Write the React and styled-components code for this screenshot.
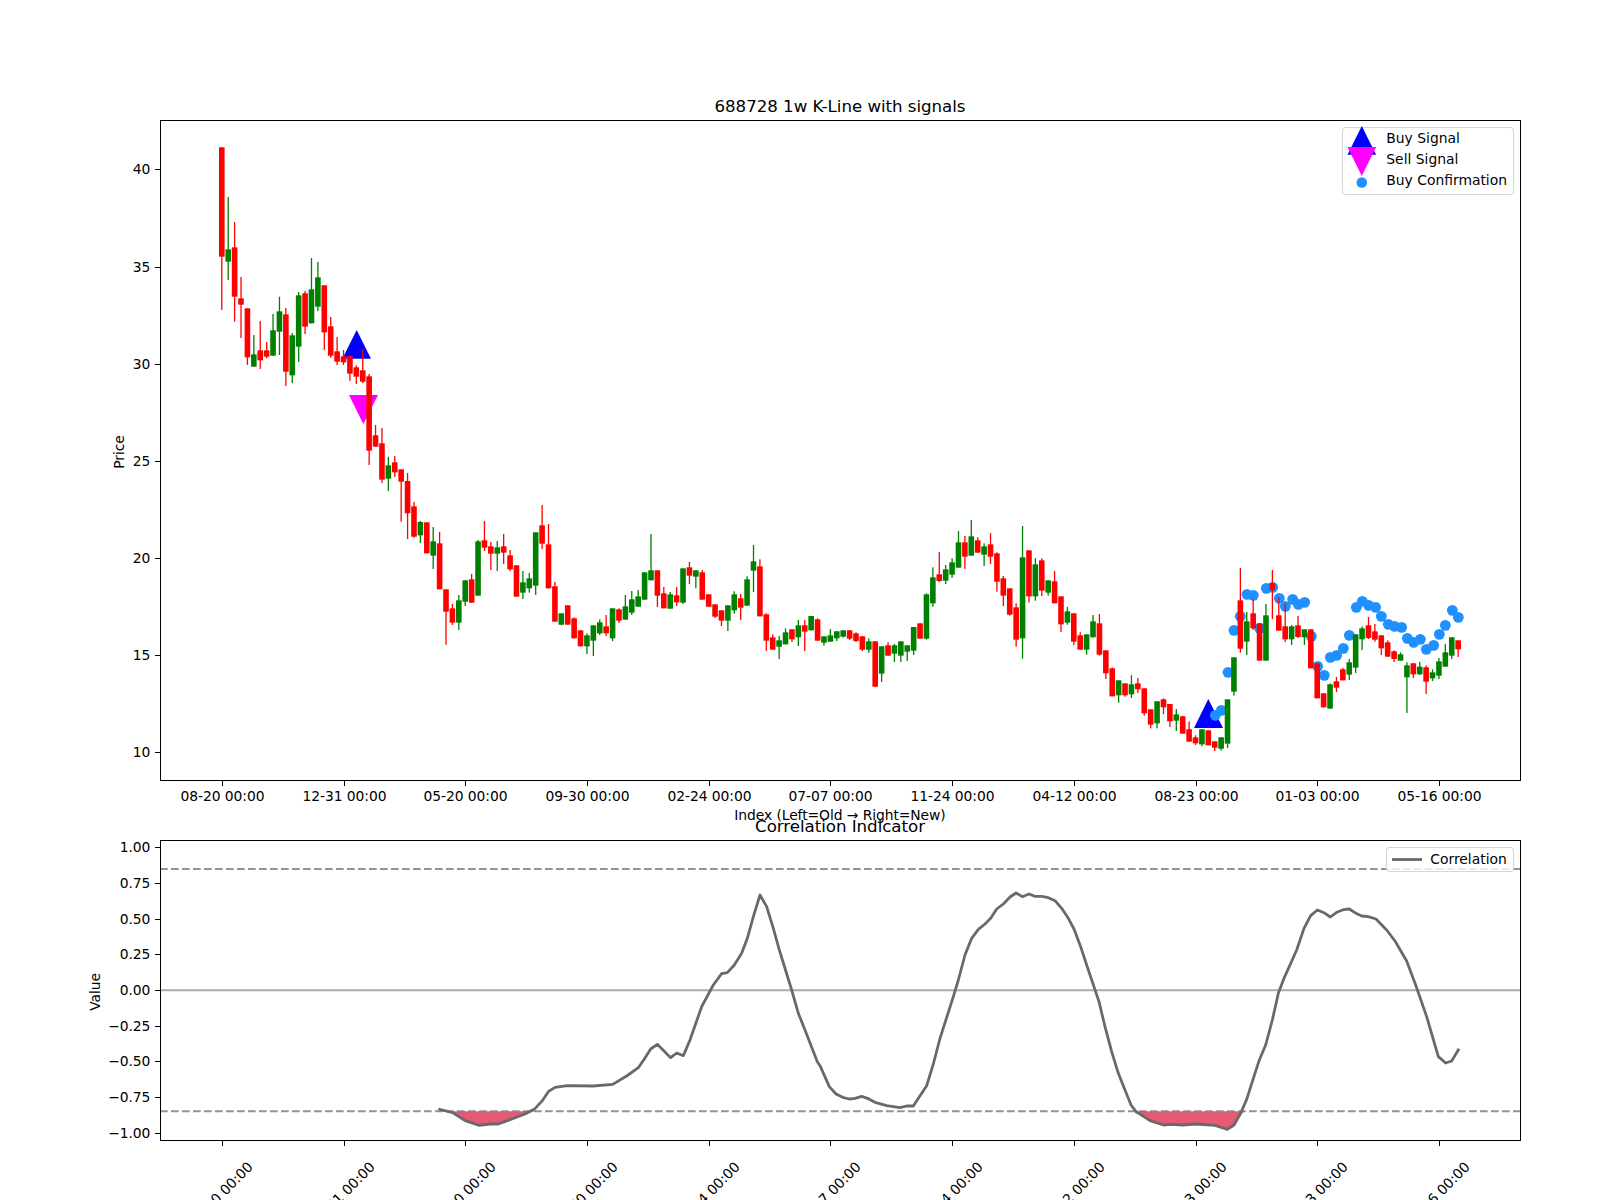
import styled, { createGlobalStyle } from 'styled-components';

const GlobalStyle = createGlobalStyle`
    html, body {
        margin: 0;
        background: #fff;
    }
`;

const Figure = styled.div`
    width: 1600px;
    height: 1200px;
    overflow: hidden;
    background: #fff;
    color: #000;
    font-family: 'DejaVu Sans', sans-serif;
`;

const Panel = styled.section`
    position: relative;
    height: ${props => props.$height}px;
    display: flex;
    flex-direction: column;
`;

const PanelTitle = styled.h2`
    flex: 0 0 ${props => props.$height}px;
    display: flex;
    align-items: flex-end;
    justify-content: center;
    box-sizing: border-box;
    width: 1360px;
    margin: 0 0 0 160px;
    padding-bottom: 3px;
    font-size: 16.67px;
    font-weight: 400;
    line-height: 20px;
    letter-spacing: -0.04px;
    white-space: nowrap;
`;

const Plot = styled.svg`
    display: block;
    flex: 1 1 0;
    min-height: 0;
    overflow: visible;
`;

const AxisText = styled.text`
    font-family: 'DejaVu Sans', sans-serif;
    font-size: 13.89px;
    letter-spacing: -0.08px;
    fill: #000;
    text-anchor: ${props => props.$anchor || 'middle'};
`;

const Legend = styled.div`
    position: absolute;
    top: ${props => props.$top}px;
    right: 86px;
    box-sizing: border-box;
    width: ${props => props.$width}px;
    padding: ${props => props.$padding};
    display: flex;
    flex-direction: column;
    gap: 3.9px;
    background: rgba(255, 255, 255, 0.8);
    border: 1px solid rgba(204, 204, 204, 0.8);
    border-radius: 4px;
`;

const LegendRow = styled.div`
    display: flex;
    align-items: center;
    gap: 8.8px;
    height: 17px;
    font-size: 13.89px;
    line-height: 17px;
    white-space: nowrap;
`;

const LegendKey = styled.svg`
    flex: 0 0 30px;
    width: 30px;
    height: 17px;
    overflow: visible;
`;

const AX = { left: 160, right: 1520 };
const TICK_LABELS = ['08-20 00:00', '12-31 00:00', '05-20 00:00', '09-30 00:00', '02-24 00:00', '07-07 00:00', '11-24 00:00', '04-12 00:00', '08-23 00:00', '01-03 00:00', '05-16 00:00'];
const candleX = i => 221.8 + 6.406 * i;
const tickX = i => Math.round(candleX(i * 19)) + 0.5;

// rows read off the picture at 3x: colour, high, body top, body bottom, low
const CANDLE_CHUNKS = [
    { oy: 100, rows: [
        ['R',142,142,470,630],['G',291,448,485,540],['R',366,442,590,665],['R',531,595,614,714],['R',625,625,772,795],
        ['G',705,763,800,800],['R',663,751,781,807],['R',726,751,770,775],['G',642,691,767,767],['G',590,634,695,765],
        ['R',624,643,815,858],['G',699,706,826,849],['G',576,586,740,786],['R',573,580,680,702],['G',474,568,670,670],
        ['G',486,532,620,633],['R',556,556,697,750],['R',651,679,767,773],['R',711,754,785,795],['R',750,769,787,795],
        ['R',766,768,821,843],['R',796,802,830,852],['R',747,811,845,849],['R',822,829,1052,1095],['R',975,1006,1040,1040],
        ['R',984,1030,1139,1149],['G',1071,1096,1136,1173],['R',1068,1087,1117,1131],['R',1108,1108,1145,1265],
    ] },
    { oy: 480, rows: [
        ['R',-21,3,100,177],['R',66,79,170,173],['G',123,126,166,189],['R',127,127,220,220],['G',141,184,227,267],
        ['R',156,190,328,328],['R',328,328,395,494],['R',372,385,428,435],['G',345,361,428,450],['G',300,301,365,378],
        ['R',282,298,368,368],['G',180,184,347,347],['R',123,181,203,213],['R',186,199,221,270],['G',183,202,221,273],
        ['R',162,199,218,252],['R',210,226,268,273],['R',256,256,350,350],['G',273,307,338,357],['G',279,295,325,338],
        ['G',157,157,317,345],['R',75,136,191,207],['R',132,193,325,325],['R',306,319,425,425],['G',400,400,434,436],
        ['R',376,376,434,434],['R',412,415,475,475],['R',451,451,499,499],['G',460,466,499,522],['G',436,436,482,528],
        ['G',418,427,460,465],['R',405,439,460,468],['G',385,385,475,483],['R',385,388,422,429],['G',345,379,419,419],
        ['G',333,358,398,405],['G',330,349,380,380],['G',277,277,359,359],['G',162,271,301,301],['R',271,271,347,381],
        ['R',321,340,385,385],['G',336,343,386,386],['R',321,346,367,378],['G',265,265,368,372],['R',246,262,287,312],
        ['G',271,271,290,325],['R',270,277,359,359],['R',343,343,380,380],['R',373,373,410,414],['R',391,391,422,438],
        ['G',376,376,422,453],['G',334,343,391,401],['R',342,355,383,420],['G',289,298,377,378],['G',195,244,272,336],
        ['R',238,259,409,409],['R',400,403,482,513],['R',463,472,509,509],['G',468,481,500,537],['G',445,457,493,493],
        ['R',448,448,478,486],['G',420,436,472,498],['R',420,436,455,513],['G',408,408,451,451],['R',415,418,482,482],
    ] },
    { oy: 480, rows: [
        ['G',469,469,488,497],['G',447,466,485,485],['G',453,454,475,483],['G',450,451,470,473],['R',450,451,476,480],
        ['R',457,460,483,486],['R',468,469,509,513],['G',475,484,509,518],['R',484,484,620,620],['G',499,499,581,606],
        ['R',487,496,527,527],['G',492,496,521,546],['G',484,484,527,546],['G',496,496,515,543],['G',441,441,512,525],
        ['R',430,430,476,476],['G',340,343,476,479],['G',262,292,370,380],['R',216,283,303,306],['G',255,268,302,312],
        ['G',235,247,284,293],['G',153,187,263,263],['R',168,187,230,267],['G',120,169,227,227],['R',172,181,218,218],
        ['G',190,199,224,258],['R',159,193,230,252],['R',217,220,305,335],['R',288,295,347,378],['R',325,325,404,407],
        ['R',370,382,479,500],['G',138,232,475,536],['R',211,211,349,368],['G',235,253,349,362],['R',235,241,332,348],
        ['G',301,301,338,347],['R',273,304,370,370],['R',349,349,433,456],['G',381,394,428,434],['R',400,400,485,495],
        ['R',457,466,509,509],['G',463,463,509,524],['G',405,424,472,472],['R',402,430,524,527],['R',511,511,580,597],
        ['R',562,565,649,649],['G',601,601,646,668],['R',610,610,646,650],['G',586,613,643,654],['R',594,610,628,639],
        ['R',625,625,700,707],['R',688,688,734,745],['G',664,664,730,745],['R',655,658,682,703],['R',672,672,724,741],
        ['G',687,703,722,753],['R',707,709,761,761],
    ] },
    { oy: 540, rows: [
        ['R',544,568,605,605],['R',586,592,610,615],['G',568,568,613,619],['R',571,571,616,616],['R',604,604,623,633],
        ['G',592,592,626,632],['G',478,478,611,624],['G',352,352,455,467],['R',84,181,326,338],['G',216,244,305,345],
        ['R',178,220,265,270],['R',250,250,362,362],['G',192,226,362,362],['R',90,130,150,237],['R',172,226,272,272],
        ['R',190,259,298,306],['G',255,259,298,315],['R',228,256,291,294],['G',268,268,292,315],['R',268,268,385,385],
        ['R',370,370,475,475],['R',460,460,502,502],['G',430,433,506,506],['R',411,424,443,456],['R',384,388,421,421],
        ['G',357,367,404,420],['G',283,283,383,399],['G',259,265,298,330],['R',231,256,294,297],['R',252,274,299,305],
        ['R',286,286,325,345],['R',301,307,350,350],['R',331,334,357,366],['G',337,343,362,362],['G',367,376,412,519],
        ['R',369,370,403,414],['G',366,380,403,405],['R',376,382,425,462],['G',388,397,415,423],['G',354,364,407,417],
        ['G',312,337,380,380],['G',292,292,347,357],['R',301,301,328,351],
    ] },
];

const candles = CANDLE_CHUNKS.flatMap(({ oy, rows }) =>
    rows.map(([c, h, t, b, l]) => ({
        color: c === 'R' ? '#ff0000' : '#008000',
        high: oy + h / 3,
        top: oy + t / 3,
        bottom: oy + b / 3,
        low: oy + l / 3,
    }))
);

const CONFIRM_DOTS = [
    [196,526],[214,511],[234,397],[252,271],[271,229],[291,163],[310,166],[329,265],[349,145],[368,142],
    [388,175],[406,199],[428,178],[445,193],[464,187],[484,289],[503,379],[523,406],[541,352],[560,346],
    [580,325],[598,286],[619,202],[637,184],[656,196],[677,202],[694,229],[715,253],[734,259],[755,262],
    [772,295],[791,307],[811,298],[829,328],[851,316],[868,283],[886,256],[907,211],[925,232],
].map(([x, y]) => [1150 + x / 3, 540 + y / 3]);

const CORR_SEGMENTS = [
    { ox: 430, pts: [[25,747],[68,758],[105,782],[148,796],[180,792],[205,792],[240,779],[285,762],[315,746],[337,722],[356,694],[375,682],[412,677],[490,678],[548,673],[590,648],[625,623],[643,597],[662,567],[682,553],[702,573],[722,593],[740,579],[760,587],[780,540],[815,440],[850,375],[875,341],[892,338],[913,315],[935,280],[952,235],[970,170],[990,105],[1010,140],[1030,205],[1048,270],[1085,390],[1105,460],[1125,510],[1162,605]] },
    { ox: 820, pts: [[0,617],[28,680],[48,702],[68,712],[88,717],[105,715],[125,709],[145,716],[165,727],[200,737],[240,743],[260,738],[280,738],[320,677],[340,612],[360,535],[400,410],[415,360],[435,285],[455,235],[475,208],[495,192],[512,175],[530,147],[550,132],[570,111],[588,99],[607,110],[627,102],[645,109],[665,109],[685,113],[705,122],[725,145],[745,175],[762,207],[782,260],[800,315],[837,425],[855,500],[875,575],[895,640],[915,690],[933,735],[950,757]] },
    { ox: 1140, pts: [[0,762],[30,782],[70,795],[90,793],[130,795],[165,792],[225,796],[262,808],[282,795],[302,760],[320,718],[340,655],[358,600],[377,555],[397,480],[415,400],[432,355],[470,270],[492,205],[512,167],[532,150],[552,158],[571,171],[590,157],[610,149],[628,147],[648,160],[665,168],[685,170],[708,177],[740,210],[765,243],[800,303],[827,375],[860,470],[895,590],[917,609],[935,603],[957,566]] },
];

const corr = CORR_SEGMENTS.flatMap(({ ox, pts }) => pts.map(([x, y]) => [ox + x / 3, 860 + y / 3]));
const LOWER_BAND = 1111.3;
const UPPER_BAND = 869;
const corrLine = corr.map(p => p.join(',')).join(' ');
const corrFill = corr.map(([x, y]) => `${x},${Math.max(y, LOWER_BAND)}`).join(' ');

const PRICE_TICKS = [[40, 169.5], [35, 267.5], [30, 364.5], [25, 461.5], [20, 558.5], [15, 655.5], [10, 752.5]];
const VALUE_TICKS = [['1.00', 847.5], ['0.75', 883.5], ['0.50', 919.5], ['0.25', 954.5], ['0.00', 990.5], ['−0.25', 1026.5], ['−0.50', 1061.5], ['−0.75', 1097.5], ['−1.00', 1133.5]];

const Frame = ({ top, bottom }) => (
    <rect x={AX.left + 0.5} y={top + 0.5} width={AX.right - AX.left} height={bottom - top} fill="none" stroke="#000" strokeWidth="1.11" shapeRendering="crispEdges" />
);

const XTicks = ({ y }) => TICK_LABELS.map((_, i) => (
    <line key={i} x1={tickX(i)} x2={tickX(i)} y1={y} y2={y + 5.4} stroke="#000" strokeWidth="1.11" shapeRendering="crispEdges" />
));

const YAxis = ({ ticks }) => ticks.map(([label, y]) => (
    <g key={label}>
        <line x1={AX.left - 4.9} x2={AX.left} y1={y} y2={y} stroke="#000" strokeWidth="1.11" shapeRendering="crispEdges" />
        <AxisText x={150.3} y={y + 4.5} $anchor="end">{label}</AxisText>
    </g>
));

const Candles = () => candles.map((c, i) => {
    const x = candleX(i);
    return (
        <g key={i} fill={c.color}>
            <rect x={x - 0.65} y={c.high} width={1.3} height={c.low - c.high} />
            <rect x={x - 2.8} y={c.top} width={5.6} height={c.bottom - c.top} />
        </g>
    );
});

const PriceChart = () => (
    <Panel $height={810}>
        <PanelTitle $height={120}>688728 1w K-Line with signals</PanelTitle>
        <Plot viewBox="0 120 1600 690" width="1600" height="690">
            <polygon points="356.7,330 342.3,358.7 371,358.7" fill="#0000ff" />
            <polygon points="1208.3,699 1194,728 1223,728" fill="#0000ff" />
            <polygon points="363.3,424 349,395 378,395" fill="#ff00ff" />
            {CONFIRM_DOTS.map(([x, y]) => <circle key={x} cx={x} cy={y} r="5.4" fill="#1e90ff" />)}
            <Candles />
            <Frame top={120} bottom={780} />
            <XTicks y={780.5} />
            <YAxis ticks={PRICE_TICKS} />
            {TICK_LABELS.map((label, i) => (
                <AxisText key={label} x={tickX(i)} y={801}>{label}</AxisText>
            ))}
            <AxisText x={840} y={820}>Index (Left=Old → Right=New)</AxisText>
            <AxisText transform="rotate(-90 124 452)" x={124} y={452}>Price</AxisText>
        </Plot>
        <Legend $top={127} $width={172} $padding="2px 0 5px 4.5px">
            <LegendRow>
                <LegendKey viewBox="0 0 30 17"><polygon points="13.8,-4 -0.5,24.7 28.1,24.7" fill="#0000ff" /></LegendKey>
                Buy Signal
            </LegendRow>
            <LegendRow>
                <LegendKey viewBox="0 0 30 17"><polygon points="13.8,25.1 -0.5,-3.9 28.1,-3.9" fill="#ff00ff" /></LegendKey>
                Sell Signal
            </LegendRow>
            <LegendRow>
                <LegendKey viewBox="0 0 30 17"><circle cx="13.8" cy="10.5" r="5.3" fill="#1e90ff" /></LegendKey>
                Buy Confirmation
            </LegendRow>
        </Legend>
    </Panel>
);

const CorrelationChart = () => (
    <Panel $height={390}>
        <PanelTitle $height={30}>Correlation Indicator</PanelTitle>
        <Plot viewBox="0 840 1600 360" width="1600" height="360">
            <polygon points={corrFill} fill="#dc143c" fillOpacity="0.7" />
            <line x1={AX.left} x2={AX.right} y1={UPPER_BAND} y2={UPPER_BAND} stroke="#808080" strokeOpacity="0.85" strokeWidth="2.08" strokeDasharray="7.7 3.3" />
            <line x1={AX.left} x2={AX.right} y1={LOWER_BAND} y2={LOWER_BAND} stroke="#808080" strokeOpacity="0.85" strokeWidth="2.08" strokeDasharray="7.7 3.3" />
            <line x1={AX.left} x2={AX.right} y1="990.3" y2="990.3" stroke="#ababab" strokeWidth="2" />
            <polyline points={corrLine} fill="none" stroke="#696969" strokeWidth="2.78" strokeLinejoin="round" />
            <Frame top={840} bottom={1140} />
            <XTicks y={1140.5} />
            <YAxis ticks={VALUE_TICKS} />
            {TICK_LABELS.map((label, i) => (
                <AxisText key={label} x={tickX(i) - 2} y={1199} transform={`rotate(-45 ${tickX(i) - 2} 1194)`}>{label}</AxisText>
            ))}
            <AxisText transform="rotate(-90 100 992)" x={100} y={992}>Value</AxisText>
        </Plot>
        <Legend $top={37} $width={128} $padding="3px 0 3px 4.5px">
            <LegendRow>
                <LegendKey viewBox="0 0 30 17"><line x1="0" x2="30" y1="8.5" y2="8.5" stroke="#696969" strokeWidth="2.78" /></LegendKey>
                Correlation
            </LegendRow>
        </Legend>
    </Panel>
);

const App = () => (
    <>
        <GlobalStyle />
        <Figure>
            <PriceChart />
            <CorrelationChart />
        </Figure>
    </>
);

export default App;
